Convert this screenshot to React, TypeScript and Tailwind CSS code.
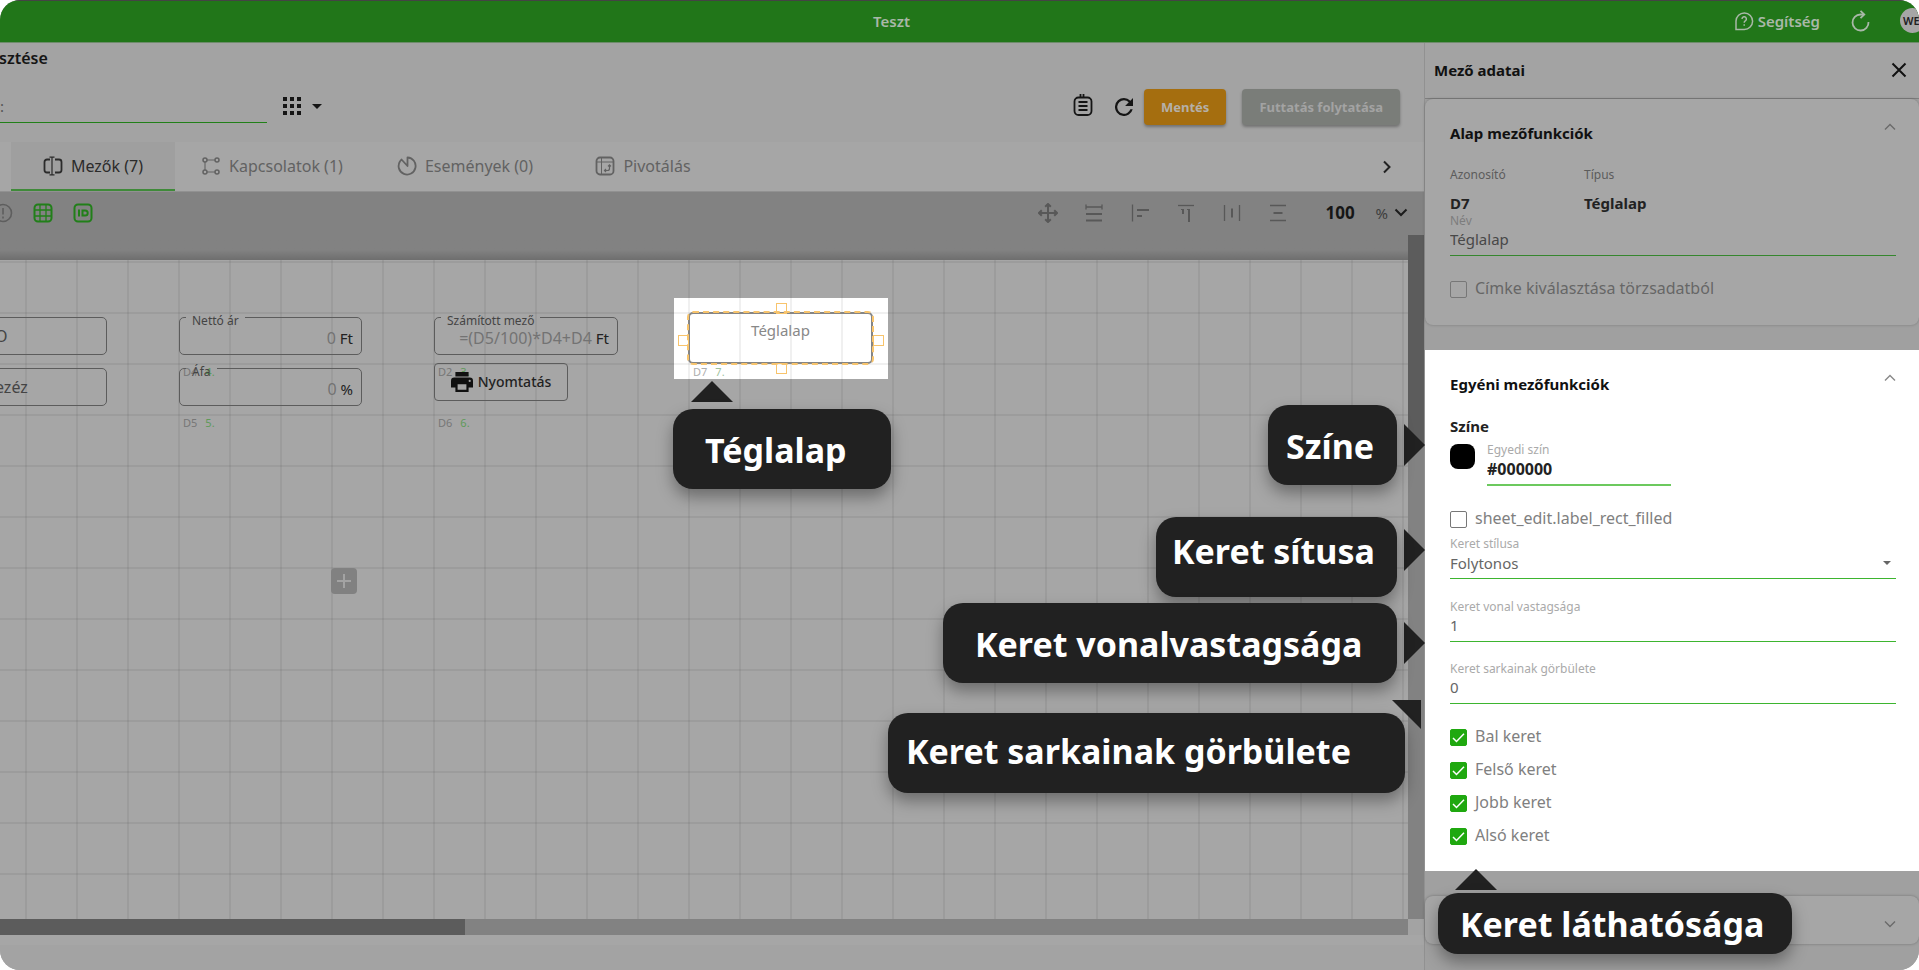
import { useState, type ReactNode } from "react";

const TABS = [
  { label: "Mezők (7)", icon: "fields", width: "w-[164px]" },
  { label: "Kapcsolatok (1)", icon: "links", width: "w-[194px]" },
  { label: "Események (0)", icon: "events", width: "w-[192px]" },
  { label: "Pivotálás", icon: "pivot", width: "w-[164px]" },
];

const ALIGN_TOOLS: { label: string; icon: ReactNode }[] = [
  {
    label: "Mozgatás",
    icon: (
      <path
        d="M10 1v18M1 10h18M7.2 3.8 10 1l2.8 2.8M7.2 16.2 10 19l2.8-2.8M3.8 7.2 1 10l2.8 2.8M16.2 7.2 19 10l-2.8 2.8"
        strokeWidth="2"
      />
    ),
  },
  {
    label: "Azonos szélesség",
    icon: (
      <>
        <path d="M2 1.5v5M18 1.5v5M2 4h16" strokeWidth="1.3" />
        <path d="M2 11h16M2 17.5h16" strokeWidth="2" />
      </>
    ),
  },
  {
    label: "Balra igazítás",
    icon: (
      <>
        <path d="M2.5 1.5v17" strokeWidth="1.3" />
        <path d="M7 7h12M7 13h5" strokeWidth="2" />
      </>
    ),
  },
  {
    label: "Felülre igazítás",
    icon: (
      <>
        <path d="M2 2.5h16" strokeWidth="1.3" />
        <path d="M7 6v5M13 6v13" strokeWidth="2" />
        <path d="M5 6.5h2M11 6.5h2" strokeWidth="1" />
      </>
    ),
  },
  {
    label: "Vízszintes elosztás",
    icon: (
      <>
        <path d="M2.5 2v16M17.5 2v16" strokeWidth="1.3" />
        <path d="M10 5.5v9" strokeWidth="2" />
      </>
    ),
  },
  {
    label: "Függőleges elosztás",
    icon: (
      <>
        <path d="M2 2.5h16M2 17.5h16" strokeWidth="1.3" />
        <path d="M5.5 10h9" strokeWidth="2" />
      </>
    ),
  },
];

const BORDERS = ["Bal keret", "Felső keret", "Jobb keret", "Alsó keret"];

function TabIcon({ name }: { name: string }) {
  return (
    <svg viewBox="0 0 20 20" className="size-5 shrink-0" fill="none" stroke="currentColor" strokeWidth="1.5">
      {name === "fields" && (
        <>
          <path
            d="M7 3.5H4A2.5 2.5 0 0 0 1.5 6v8A2.5 2.5 0 0 0 4 16.5h3M12 3.5h4A2.5 2.5 0 0 1 18.5 6v8a2.5 2.5 0 0 1-2.5 2.5h-4"
            strokeWidth="1.8"
          />
          <path d="M9 1.5v17M6.5 1.2h5M6.5 18.8h5" strokeWidth="1.2" />
        </>
      )}
      {name === "links" && (
        <>
          <circle cx="4" cy="4" r="2" />
          <circle cx="16" cy="4" r="2" />
          <circle cx="4" cy="16" r="2" />
          <circle cx="16" cy="16" r="2" />
          <path d="M6 4h8M4 6v8M6 16h8" strokeWidth="1.1" />
        </>
      )}
      {name === "events" && (
        <path d="M10.5 1.5a8.5 8.5 0 1 1-7.6 4L4.5 3.5l6 6.5Z" strokeWidth="1.8" strokeLinejoin="round" />
      )}
      {name === "pivot" && (
        <>
          <rect x="1.5" y="1.5" width="17" height="17" rx="3.5" strokeWidth="1.8" />
          <path d="M2 6h16M6.5 2v16" strokeWidth="1" />
          <path d="M9.5 14.5h3a2 2 0 0 0 2-2V9M11 13l-1.5 1.5L11 16M13 10.3l1.5-1.5 1.5 1.5" strokeWidth="1.2" />
        </>
      )}
    </svg>
  );
}

function Chevron({ down = false }: { down?: boolean }) {
  return (
    <svg viewBox="0 0 12 8" className="h-2 w-3" fill="none" stroke="currentColor" strokeWidth="1.4">
      <path d={down ? "m1 1.5 5 5 5-5" : "m1 6.5 5-5 5 5"} />
    </svg>
  );
}

function TopBar() {
  return (
    <header className="flex h-[43px] shrink-0 items-center border-t border-b border-t-[#444444] border-b-[#6e8c6b] bg-[#217619] pb-0.5 text-[#a9b8a8]">
      <div className="flex-1" />
      <h1 className="pr-[136px] text-[15px] leading-5 font-semibold">Teszt</h1>
      <div className="flex h-full flex-1 items-center justify-end gap-[30px]">
        <a href="#help" className="flex items-center gap-1 text-[15px] leading-5 font-semibold">
          <svg viewBox="0 0 20 20" className="size-5" fill="none" stroke="currentColor" strokeWidth="1.5">
            <path d="M2 18.5V10a8.3 8.3 0 1 1 8.3 8.5Z" />
            <path d="M8 8a2.2 2.2 0 1 1 3.3 1.9c-.8.5-1.1.9-1.1 1.8M10.2 13.2v1.5" />
          </svg>
          Segítség
        </a>
        <button type="button" aria-label="Frissítés">
          <svg viewBox="0 0 20 22" className="h-[22px] w-5" fill="none" stroke="currentColor" strokeWidth="1.8">
            <path d="M14 4.5h-3.5A8 8 0 1 0 18.5 12" />
            <path d="m10.5.8 3.8 3.7-3.8 3.7" />
          </svg>
        </button>
        <span className="-mr-1.5 flex size-[25px] items-center rounded-full bg-[#a6a6a6] pl-[3px] text-[11px] leading-4 font-semibold text-[#212121]">
          WE
        </span>
      </div>
    </header>
  );
}

function SheetHeader() {
  return (
    <div className="h-[99px] shrink-0 bg-[#a3a3a3] pt-[5px] text-[#151515]">
      <h2 className="-ml-px text-[16px] leading-5 font-semibold">sztése</h2>
      <div className="mt-[5px] flex items-start">
        <input
          aria-label="Munkalap neve"
          defaultValue=":"
          className="mt-[17px] h-[33px] w-[267px] border-b border-[#218018] bg-transparent text-[15px] text-[#555] outline-none"
        />
        <button type="button" aria-label="Nézet" className="mt-6 ml-4 flex items-center gap-[11px]">
          <svg viewBox="0 0 18 18" className="size-[18px]" fill="currentColor">
            {[0, 7, 14].map((y) => [0, 7, 14].map((x) => <rect key={`${x}-${y}`} x={x} y={y} width="4" height="4" />))}
          </svg>
          <svg viewBox="0 0 10 5" className="h-[5px] w-[10px]" fill="currentColor">
            <path d="M0 0h10L5 5Z" />
          </svg>
        </button>
        <div className="mt-4 mr-6 ml-auto flex items-center">
          <button type="button" aria-label="Napló" className="mr-[22px] mb-1">
            <svg viewBox="0 0 20 22" className="h-[22px] w-5" fill="none" stroke="currentColor" strokeWidth="1.8">
              <rect x="1.5" y="3.5" width="17" height="17.5" rx="4" />
              <path d="M7.5 0v4M10.5 0v4M5.5 8h9M5.5 12h9M5.5 16h9" />
            </svg>
          </button>
          <button type="button" aria-label="Újratöltés" className="mr-[11px]">
            <svg viewBox="4 4 16 16" className="size-[18px]" fill="currentColor">
              <path d="M17.65 6.35A7.96 7.96 0 0 0 12 4a8 8 0 1 0 7.73 10h-2.08A6 6 0 1 1 12 6c1.66 0 3.14.69 4.22 1.78L13 11h7V4z" />
            </svg>
          </button>
          <button
            type="button"
            className="h-9 rounded bg-[#a56e0f] px-[17px] text-[13px] leading-5 font-bold text-[#b5b0a8] shadow-[0_2px_3px_rgba(0,0,0,0.3)]"
          >
            Mentés
          </button>
          <button
            type="button"
            className="ml-4 h-9 rounded bg-[#7a7d79] px-[17px] text-[13px] leading-5 font-bold text-[#a3a3a3] shadow-[0_2px_3px_rgba(0,0,0,0.3)]"
          >
            Futtatás folytatása
          </button>
        </div>
      </div>
    </div>
  );
}

function Tabs() {
  const [active, setActive] = useState(0);
  return (
    <nav className="flex h-[49px] shrink-0 items-stretch bg-[#a6a6a6] pr-8 pl-[11px]">
      {TABS.map((tab, i) => (
        <button
          key={tab.label}
          type="button"
          onClick={() => setActive(i)}
          className={`flex items-center justify-center gap-2 border-b-2 text-[16px] leading-5 ${tab.width} ${
            i === active ? "border-[#3f8a39] bg-[#9f9f9f] text-[#2b2b2b]" : "border-transparent text-[#626262]"
          }`}
        >
          <TabIcon name={tab.icon} />
          {tab.label}
        </button>
      ))}
      <button type="button" aria-label="További fülek" className="ml-auto text-[#222]">
        <svg viewBox="0 0 10 14" className="h-[14px] w-[10px]" fill="none" stroke="currentColor" strokeWidth="2">
          <path d="M2 1.5 7.5 7 2 12.5" />
        </svg>
      </button>
    </nav>
  );
}

function Toolbar() {
  return (
    <div className="flex h-[44px] shrink-0 items-center border-t border-[#919191] bg-[#828282] pr-4 pb-0.5">
      <div className="-ml-[7px] flex items-center gap-5 text-[#217f19]">
        <button type="button" aria-label="Figyelmeztetések" className="text-[#5e5e5e]">
          <svg viewBox="0 0 20 20" className="size-5" fill="none" stroke="currentColor" strokeWidth="1.6">
            <circle cx="10" cy="10" r="8.5" />
            <path d="M10 5v6.5M10 13.5v2" />
          </svg>
        </button>
        <button type="button" aria-label="Rács">
          <svg viewBox="0 0 20 20" className="size-5" fill="none" stroke="currentColor">
            <rect x="1.5" y="1.5" width="17" height="17" rx="3.5" strokeWidth="2" />
            <path d="M7 2v16M13 2v16M2 7h16M2 13h16" strokeWidth="1.3" />
          </svg>
        </button>
        <button type="button" aria-label="Azonosítók">
          <svg viewBox="0 0 20 20" className="size-5" fill="none" stroke="currentColor" strokeWidth="2">
            <rect x="1.5" y="1.5" width="17" height="17" rx="3.5" />
            <path d="M6 6.5v7M9.5 7.5h2.7a2.5 2.5 0 0 1 0 5H9.5Z" />
          </svg>
        </button>
      </div>
      <div className="ml-auto flex items-center gap-[26px] text-[#585858]">
        {ALIGN_TOOLS.map((tool) => (
          <button key={tool.label} type="button" aria-label={tool.label}>
            <svg viewBox="0 0 20 20" className="size-5" fill="none" stroke="currentColor">
              {tool.icon}
            </svg>
          </button>
        ))}
      </div>
      <input
        aria-label="Nagyítás"
        defaultValue="100"
        className="ml-[38px] w-[50px] bg-transparent text-[17px] leading-5 font-bold text-[#161616] outline-none"
      />
      <button type="button" className="flex items-center gap-1.5 text-[15px] leading-5 text-[#3d3d3d]">
        %
        <svg viewBox="0 0 14 9" className="h-[9px] w-[14px] text-[#1c1c1c]" fill="none" stroke="currentColor" strokeWidth="2">
          <path d="M1.5 1.5 7 7l5.5-5.5" />
        </svg>
      </button>
    </div>
  );
}

type OutlineFieldProps = { label?: string; value: string; unit?: string; place: string; name: string };

function OutlineField({ label, value, unit, place, name }: OutlineFieldProps) {
  return (
    <fieldset className={`absolute h-[38px] min-w-0 rounded-[5px] border border-[#5c5c5c] ${place}`}>
      {label && <legend className="ml-[6px] h-0 px-1.5 text-[12px] leading-1.5 text-[#444]">{label}</legend>}
      <label className={`flex h-full items-center gap-1 px-2 text-[16px] leading-5 ${unit ? "pt-1" : ""}`}>
        <input
          aria-label={name}
          defaultValue={value}
          className={`min-w-0 flex-1 bg-transparent outline-none ${unit ? "text-right text-[#737373]" : "text-[#444]"}`}
        />
        {unit && <span className="text-[15px] text-[#222]">{unit}</span>}
      </label>
    </fieldset>
  );
}

function FieldTag({ id, order, place }: { id: string; order: number; place: string }) {
  return (
    <span className={`absolute flex gap-2 text-[11px] leading-4 text-[#777] ${place}`}>
      {id} <span className="text-[#5f9a5a]">{order}.</span>
    </span>
  );
}

const HANDLE = "absolute size-[11px] border border-[#f8c46c]";

function Canvas() {
  return (
    <div className="relative flex-1 overflow-hidden bg-[#a6a6a6]">
      <div className="absolute top-[38px] left-[674px] h-[81px] w-[214px] bg-white" />
      <div className="absolute inset-0 bg-[linear-gradient(to_right,rgba(0,0,0,0.06)_2px,transparent_2px),linear-gradient(to_bottom,rgba(0,0,0,0.06)_2px,transparent_2px)] bg-[size:51px_51px] bg-[position:25px_1px]" />

      <OutlineField name="D1" value="O" place="top-[57px] -left-[14px] w-[121px]" />
      <OutlineField name="D3" value="ezéz" place="top-[108px] -left-[14px] w-[121px]" />

      <FieldTag id="D4" order={4} place="top-[104px] left-[183px]" />
      <FieldTag id="D5" order={5} place="top-[155px] left-[183px]" />
      <FieldTag id="D2" order={3} place="top-[104px] left-[438px]" />
      <FieldTag id="D6" order={6} place="top-[155px] left-[438px]" />
      <FieldTag id="D7" order={7} place="top-[104px] left-[693px] opacity-60" />

      <OutlineField name="D4" label="Nettó ár" value="0" unit="Ft" place="top-[57px] left-[179px] w-[183px]" />
      <OutlineField name="D5" label="Áfa" value="0" unit="%" place="top-[108px] left-[179px] w-[183px]" />
      <OutlineField
        name="D2"
        label="Számított mező"
        value="=(D5/100)*D4+D4"
        unit="Ft"
        place="top-[57px] left-[434px] w-[184px]"
      />

      <button
        type="button"
        className="absolute top-[103px] left-[434px] flex h-[38px] w-[134px] items-center justify-center gap-[5px] rounded border border-[#5c5c5c] text-[14px] leading-5 font-medium text-[#222]"
      >
        <svg viewBox="2 3 20 18" className="h-5 w-[22px] text-[#111]" fill="currentColor">
          <path d="M19 8H5a3 3 0 0 0-3 3v6h4v4h12v-4h4v-6a3 3 0 0 0-3-3zm-3 11H8v-5h8v5zm3-7a1 1 0 1 1 0-2 1 1 0 0 1 0 2zM18 3H6v4h12V3z" />
        </svg>
        Nyomtatás
      </button>

      <div className="absolute top-[52px] left-[688px] h-[52px] w-[185px] rounded-[5px] border-2 border-[#858585] pt-1 text-center text-[15px] leading-6 text-[#888] outline-2 -outline-offset-1 outline-[#f8c46c] outline-dashed">
        Téglalap
      </div>
      <span className={`${HANDLE} top-[43px] left-[776px]`} />
      <span className={`${HANDLE} top-[75px] left-[678px]`} />
      <span className={`${HANDLE} top-[75px] left-[873px]`} />
      <span className={`${HANDLE} top-[103px] left-[776px]`} />

      <button
        type="button"
        aria-label="Új mező"
        className="absolute top-[308px] left-[331px] flex size-[26px] items-center justify-center rounded bg-[#818181] text-[#a3a3a3]"
      >
        <svg viewBox="0 0 14 14" className="size-[14px]" fill="none" stroke="currentColor" strokeWidth="2">
          <path d="M7 0v14M0 7h14" />
        </svg>
      </button>
    </div>
  );
}

function Workspace() {
  return (
    <div className="flex min-h-0 flex-1 flex-col">
      <div className="flex min-h-0 flex-1">
        <div className="flex min-w-0 flex-1 flex-col">
          <div className="h-[25px] shrink-0 bg-linear-to-b from-[#828282] from-60% to-[#6e6e6e]" />
          <Canvas />
        </div>
        <div className="w-4 bg-[#828282]">
          <div className="h-[210px] bg-[#5c5c5c]" />
        </div>
      </div>
      <div className="mr-4 h-4 bg-[#828282]">
        <div className="h-full w-[33%] bg-[#5c5c5c]" />
      </div>
    </div>
  );
}

function PanelCard({ title, lit = false, children }: { title: string; lit?: boolean; children: ReactNode }) {
  return (
    <section
      className={
        lit
          ? "bg-white pt-6 pr-[23px] pb-[25px] pl-[25px]"
          : "rounded-lg bg-[#a6a6a6] pt-6 pr-[23px] pb-[26px] pl-[25px] shadow-[0_0_3px_rgba(0,0,0,0.25)]"
      }
    >
      <div className="flex items-start justify-between">
        <h3 className="text-[15px] leading-5 font-bold text-[#111]">{title}</h3>
        <button type="button" aria-label={title} className={lit ? "text-[#888]" : "text-[#6a6a6a]"}>
          <Chevron />
        </button>
      </div>
      {children}
    </section>
  );
}

type LineFieldProps = { id: string; label: string; value: string; lit?: boolean };

function LineField({ id, label, value, lit = false }: LineFieldProps) {
  return (
    <div>
      <label htmlFor={id} className={`block text-[12px] leading-4 ${lit ? "text-[#aaa]" : "text-[#7d7d7d]"}`}>
        {label}
      </label>
      <input
        id={id}
        defaultValue={value}
        className={`block h-[27px] w-full border-b bg-transparent pb-1.5 text-[15px] leading-5 outline-none ${
          lit ? "border-[#3db52f] text-[#666]" : "border-[#35862e] text-[#484848]"
        }`}
      />
    </div>
  );
}

function CheckRow({ label, checked = false, lit = false }: { label: string; checked?: boolean; lit?: boolean }) {
  return (
    <label className={`flex h-5 items-center gap-2 text-[16px] leading-5 ${lit ? "text-[#808080]" : "text-[#666]"}`}>
      <span className="relative flex size-[17px] items-center justify-center">
        <input
          type="checkbox"
          defaultChecked={checked}
          className="peer size-[17px] appearance-none rounded-[2px] border border-[#777] checked:border-[#1fa80f] checked:bg-[#1fa80f]"
        />
        <svg
          viewBox="0 0 17 17"
          className="pointer-events-none absolute inset-0 hidden size-[17px] text-white peer-checked:block"
          fill="none"
          stroke="currentColor"
          strokeWidth="1.5"
        >
          <path d="m3 9 3.5 3.5L14 4.8" />
        </svg>
      </span>
      <span className="pb-0.5">{label}</span>
    </label>
  );
}

function SidePanel() {
  return (
    <aside className="flex w-[495px] shrink-0 flex-col border-l border-[#919191] bg-[#a0a0a0]">
      <div className="flex h-14 shrink-0 items-center justify-between border-b border-[#7f7f7f] bg-[#a3a3a3] pr-3 pb-0.5 pl-[9px] text-[#111]">
        <h2 className="text-[15px] leading-5 font-bold">Mező adatai</h2>
        <button type="button" aria-label="Bezárás">
          <svg viewBox="0 0 16 16" className="size-4" fill="none" stroke="currentColor" strokeWidth="2">
            <path d="m1.5 1.5 13 13M14.5 1.5l-13 13" />
          </svg>
        </button>
      </div>

      <div className="flex flex-col gap-[25px]">
        <PanelCard title="Alap mezőfunkciók">
          <dl className="mt-6 flex">
            <div className="w-[134px]">
              <dt className="text-[12px] leading-4 text-[#5c5c5c]">Azonosító</dt>
              <dd className="mt-2.5 text-[15px] leading-5 font-bold text-[#222]">D7</dd>
            </div>
            <div>
              <dt className="text-[12px] leading-4 text-[#5c5c5c]">Típus</dt>
              <dd className="mt-2.5 text-[15px] leading-5 font-bold text-[#222]">Téglalap</dd>
            </div>
          </dl>
          <LineField id="name" label="Név" value="Téglalap" />
          <div className="mt-[23px]">
            <CheckRow label="Címke kiválasztása törzsadatból" />
          </div>
        </PanelCard>

        <PanelCard title="Egyéni mezőfunkciók" lit>
          <h4 className="mt-[22px] text-[15px] leading-5 font-bold text-[#222]">Színe</h4>
          <div className="mt-1.5 flex items-start gap-3">
            <button type="button" aria-label="Színválasztó" className="mt-0.5 size-[25px] rounded-lg bg-black" />
            <div className="w-[184px]">
              <label htmlFor="color" className="block text-[12px] leading-4 text-[#aaa]">
                Egyedi szín
              </label>
              <input
                id="color"
                defaultValue="#000000"
                className="block h-7 w-full border-b-2 border-[#6cc95e] pb-1 text-[16px] leading-5 font-bold text-[#222] outline-none"
              />
            </div>
          </div>
          <div className="mt-[23px]">
            <CheckRow label="sheet_edit.label_rect_filled" lit />
          </div>
          <div className="relative mt-[7px]">
            <label htmlFor="style" className="block text-[12px] leading-4 text-[#aaa]">
              Keret stílusa
            </label>
            <select
              id="style"
              className="block h-[27px] w-full appearance-none border-b border-[#3db52f] bg-transparent pb-1 text-[15px] leading-5 text-[#666] outline-none"
            >
              <option>Folytonos</option>
            </select>
            <svg
              viewBox="0 0 8 4"
              className="pointer-events-none absolute right-[5px] bottom-[14px] h-1 w-2 text-[#666]"
              fill="currentColor"
            >
              <path d="M0 0h8L4 4Z" />
            </svg>
          </div>
          <div className="mt-5 flex flex-col gap-[19px]">
            <LineField id="width" label="Keret vonal vastagsága" value="1" lit />
            <LineField id="radius" label="Keret sarkainak görbülete" value="0" lit />
          </div>
          <div className="mt-[23px] flex flex-col gap-[13px]">
            {BORDERS.map((label) => (
              <CheckRow key={label} label={label} checked lit />
            ))}
          </div>
        </PanelCard>

        <button
          type="button"
          aria-label="További beállítások"
          className="flex h-12 items-center justify-end rounded-lg bg-[#a6a6a6] pt-2 pr-[23px] text-[#6a6a6a] shadow-[0_0_3px_rgba(0,0,0,0.3)]"
        >
          <Chevron down />
        </button>
      </div>
    </aside>
  );
}

function Callout({ text, place }: { text: string; place: string }) {
  return (
    <div
      className={`absolute flex items-center rounded-[20px] bg-[#212121] text-[34px] leading-10 font-bold whitespace-nowrap text-white shadow-[0_8px_16px_rgba(0,0,0,0.35)] ${place}`}
    >
      {text}
    </div>
  );
}

function Arrow({ points, place }: { points: string; place: string }) {
  return (
    <svg viewBox="0 0 42 42" className={`absolute text-[#212121] ${place}`} preserveAspectRatio="none" fill="currentColor">
      <polygon points={points} />
    </svg>
  );
}

function Callouts() {
  return (
    <div className="pointer-events-none absolute inset-0">
      <Arrow points="0,42 21,0 42,42" place="top-[381px] left-[691px] h-[21px] w-[42px]" />
      <Callout text="Téglalap" place="top-[409px] left-[673px] h-20 w-[218px] pt-0.5 pl-8" />

      <Arrow points="0,0 42,21 0,42" place="top-[424px] right-[494px] h-[42px] w-[21px]" />
      <Callout text="Színe" place="top-[405px] right-[522px] h-20 w-[129px] pt-0.5 pl-[18px]" />

      <Arrow points="0,0 42,21 0,42" place="top-[529px] right-[494px] h-[42px] w-[21px]" />
      <Callout text="Keret sítusa" place="top-[517px] right-[522px] h-20 w-[241px] pb-3 pl-4" />

      <Arrow points="0,0 42,21 0,42" place="top-[622px] right-[494px] h-[42px] w-[21px]" />
      <Callout text="Keret vonalvastagsága" place="top-[603px] right-[522px] h-20 w-[454px] pt-0.5 pl-8" />

      <Arrow points="0,0 42,0 42,42" place="top-[700px] right-[498px] h-[29px] w-[29px]" />
      <Callout text="Keret sarkainak görbülete" place="top-[713px] right-[514px] h-20 w-[517px] pb-1 pl-[18px]" />

      <Arrow points="0,42 21,0 42,42" place="top-[869px] right-[422px] h-[21px] w-[42px]" />
      <Callout text="Keret láthatósága" place="top-[893px] right-[127px] h-[61px] w-[354px] pl-[22px]" />
    </div>
  );
}

export default function App() {
  return (
    <div className="relative flex h-screen flex-col overflow-hidden rounded-[20px] bg-[#a3a3a3] font-['Noto_Sans',sans-serif]">
      <TopBar />
      <div className="flex min-h-0 flex-1">
        <main className="flex min-w-0 flex-1 flex-col">
          <SheetHeader />
          <Tabs />
          <Toolbar />
          <Workspace />
          <footer className="h-[35px] shrink-0 border-t-[10px] border-[#a6a6a6] bg-[#a3a3a3]" />
        </main>
        <SidePanel />
      </div>
      <Callouts />
    </div>
  );
}
